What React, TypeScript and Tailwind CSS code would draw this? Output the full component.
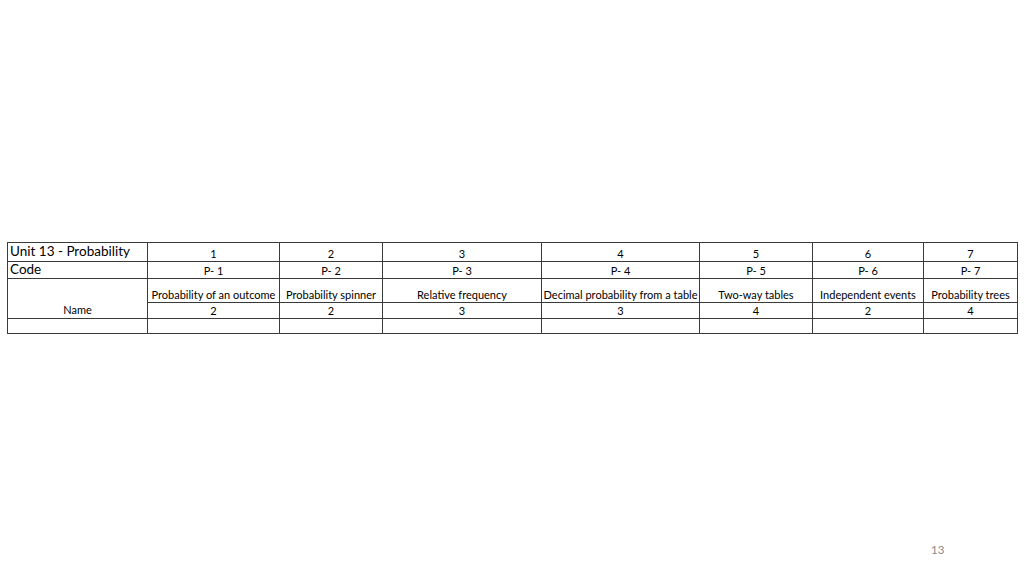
import React from "react";

const topics = [
  { n: "1", code: "P- 1", name: "Probability of an outcome", score: "2" },
  { n: "2", code: "P- 2", name: "Probability spinner", score: "2" },
  { n: "3", code: "P- 3", name: "Relative frequency", score: "3" },
  { n: "4", code: "P- 4", name: "Decimal probability from a table", score: "3" },
  { n: "5", code: "P- 5", name: "Two-way tables", score: "4" },
  { n: "6", code: "P- 6", name: "Independent events", score: "2" },
  { n: "7", code: "P- 7", name: "Probability trees", score: "4" },
];

const widths = [140, 132, 103, 159, 158, 113, 111, 94];

const cell = "border border-[#3a3a3a] p-0 leading-none";

export default function App() {
  return (
    <div className="relative h-[576px] w-[1024px] bg-white font-['Lato','Liberation_Sans',sans-serif] text-black">
      <div className="pl-[7px] pt-[242px]">
        <table className="table-fixed border-collapse" style={{ width: 1010 }}>
          <colgroup>
            {widths.map((w, i) => (
              <col key={i} style={{ width: w }} />
            ))}
          </colgroup>
          <tbody>
            <tr className="h-[19px]">
              <td className={`${cell} pl-[2px] align-top text-[13.5px]`}>
                <div className="pt-[2px]">Unit 13 - Probability</div>
              </td>
              {topics.map((t) => (
                <td key={t.n} className={`${cell} text-center align-bottom text-[11px]`}>
                  <div className="pb-[2px]">{t.n}</div>
                </td>
              ))}
            </tr>
            <tr className="h-[17px]">
              <td className={`${cell} pl-[2px] align-top text-[13.5px]`}>
                <div className="pt-[1px]">Code</div>
              </td>
              {topics.map((t) => (
                <td key={t.n} className={`${cell} text-center align-bottom text-[11px]`}>
                  <div className="pb-[2px]">{t.code}</div>
                </td>
              ))}
            </tr>
            <tr className="h-[24px]">
              <td rowSpan={2} className={`${cell} text-center align-bottom text-[11px]`}>
                <div className="pb-[3px]">Name</div>
              </td>
              {topics.map((t) => (
                <td key={t.n} className={`${cell} whitespace-nowrap text-center align-bottom text-[11px]`}>
                  <div className="pb-[2px]">{t.name}</div>
                </td>
              ))}
            </tr>
            <tr className="h-[16px]">
              {topics.map((t) => (
                <td key={t.n} className={`${cell} text-center align-bottom text-[11px]`}>
                  <div className="pb-[2px]">{t.score}</div>
                </td>
              ))}
            </tr>
            <tr className="h-[15px]">
              {widths.map((_, i) => (
                <td key={i} className={cell}></td>
              ))}
            </tr>
          </tbody>
        </table>
      </div>
      <div className="absolute left-[931px] top-[541px] text-[11.5px] text-[#8a8a8a]">13</div>
    </div>
  );
}
